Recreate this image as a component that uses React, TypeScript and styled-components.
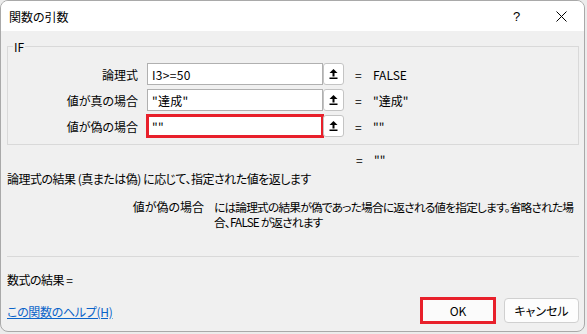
// 関数の引数 ダイアログ - Excel の IF 関数の引数入力画面
import React from "react";
import styled, { createGlobalStyle } from "styled-components";

const GlobalStyle = createGlobalStyle`
  html, body {
    margin: 0;
    padding: 0;
    background: #ececec;
  }
  body {
    font-family: "Noto Sans CJK JP", "Noto Sans", sans-serif;
    font-feature-settings: "palt";
    font-size: 12px;
    color: #000;
  }
`;

const Window = styled.div`
  width: 585px;
  height: 332px;
  box-sizing: border-box;
  border: 1px solid #a9a9a9;
  border-radius: 8px;
  background: #f0f0f0;
  overflow: hidden;
  display: flex;
  flex-direction: column;
`;

const TitleBar = styled.div`
  height: 30px;
  flex-shrink: 0;
  background: #ffffff;
  display: flex;
  align-items: center;
  justify-content: space-between;
  padding-left: 8px;
`;

const Title = styled.div`
  font-size: 12px;
  line-height: 15px;
`;

const Controls = styled.div`
  display: flex;
  height: 100%;
`;

const ControlButton = styled.div`
  width: 45px;
  height: 100%;
  display: flex;
  align-items: center;
  justify-content: center;
  font-size: 13px;
  font-family: "Liberation Sans", sans-serif;
`;

const Body = styled.div`
  flex: 1;
  display: flex;
  flex-direction: column;
  padding: 0 5px 0 6px;
`;

const Group = styled.fieldset`
  margin: 8px 0 0 0;
  border: 1px solid #d9d9d9;
  padding: 9px 0 7px 0;
  display: flex;
  flex-direction: column;
  gap: 4px;
`;

const Legend = styled.legend`
  font-size: 12px;
  line-height: 15px;
  padding: 0 1px;
  margin-left: 5px;
`;

const ArgRow = styled.div`
  display: flex;
  align-items: center;
  height: 22px;
`;

const ArgLabel = styled.div`
  width: 130px;
  margin-right: 9px;
  text-align: right;
  line-height: 15px;
`;

const ArgInput = styled.div<{ $active?: boolean }>`
  width: 176px;
  height: 22px;
  box-sizing: border-box;
  border: 1px solid #b0b0b0;
  background: #ffffff;
  padding-left: 4px;
  display: flex;
  align-items: center;
  line-height: 15px;
  letter-spacing: 0.3px;
  outline: ${(p) => (p.$active ? "3px solid #e8202b" : "none")};
  outline-offset: -2px;
`;

const PickButton = styled.div`
  width: 21px;
  height: 22px;
  box-sizing: border-box;
  border: 1px solid #c4c4c4;
  border-radius: 3px;
  background: #ffffff;
  display: flex;
  align-items: center;
  justify-content: center;
`;

const Eq = styled.span`
  width: 18px;
  margin-left: 11px;
  line-height: 15px;
`;

const Value = styled.span`
  line-height: 15px;
`;

const ResultRow = styled.div`
  display: flex;
  margin-top: 7px;
  padding-left: 338px;
`;

const Text = styled.div<{ $top: number }>`
  margin-top: ${(p) => p.$top}px;
  line-height: 15px;
  letter-spacing: -0.5px;
  white-space: nowrap;
`;

const ArgHelp = styled.div`
  display: grid;
  grid-template-columns: 197px 366px;
  column-gap: 10px;
  margin-top: 13px;
  line-height: 15px;
  white-space: nowrap;
`;

const ArgHelpName = styled.div`
  text-align: right;
`;

const ArgHelpText = styled.div`
  font-size: 11.7px;
  letter-spacing: -0.8px;
`;

const Separator = styled.div`
  margin-top: 27px;
  border-top: 1px solid #d9d9d9;
`;

const Footer = styled.div`
  display: flex;
  align-items: center;
  justify-content: space-between;
  margin-top: 10px;
`;

const HelpLink = styled.a`
  color: #0a63c9;
  text-decoration: underline;
  line-height: 15px;
  margin-top: 2px;
  letter-spacing: -0.3px;
`;

const Buttons = styled.div`
  display: flex;
  align-items: center;
  gap: 8px;
`;

const OkButton = styled.div`
  width: 76px;
  height: 27px;
  box-sizing: border-box;
  border: 3px solid #e8202b;
  background: #fbfbfb;
  display: flex;
  align-items: center;
  justify-content: center;
`;

const CancelButton = styled.div`
  width: 75px;
  height: 25px;
  box-sizing: border-box;
  border: 1px solid #d0d0d0;
  border-radius: 4px;
  background: #fdfdfd;
  display: flex;
  align-items: center;
  justify-content: center;
`;

const PickIcon = () => (
  <svg width="9" height="10" viewBox="0 0 9 10">
    <polygon points="4.5,0 0.5,4 8.5,4" fill="#000" />
    <rect x="3.5" y="3.5" width="2" height="4" fill="#000" />
    <rect x="0.5" y="8.5" width="8" height="1.5" fill="#000" />
  </svg>
);

const CloseIcon = () => (
  <svg width="11" height="11" viewBox="0 0 11 11">
    <path d="M0.5 0.5 L10.5 10.5 M10.5 0.5 L0.5 10.5" stroke="#000" strokeWidth="1" />
  </svg>
);

const args = [
  { label: "論理式", input: "I3>=50", value: "FALSE" },
  { label: "値が真の場合", input: "\"達成\"", value: "\"達成\"" },
  { label: "値が偽の場合", input: "\"\"", value: "\"\"", active: true },
];

export default function App() {
  return (
    <>
      <GlobalStyle />
      <Window>
        <TitleBar>
          <Title>関数の引数</Title>
          <Controls>
            <ControlButton>?</ControlButton>
            <ControlButton>
              <CloseIcon />
            </ControlButton>
          </Controls>
        </TitleBar>

        <Body>
          <Group>
            <Legend>IF</Legend>
            {args.map((a) => (
              <ArgRow key={a.label}>
                <ArgLabel>{a.label}</ArgLabel>
                <ArgInput $active={a.active}>{a.input}</ArgInput>
                <PickButton>
                  <PickIcon />
                </PickButton>
                <Eq>=</Eq>
                <Value>{a.value}</Value>
              </ArgRow>
            ))}
          </Group>

          <ResultRow>
            <Eq>=</Eq>
            <Value>""</Value>
          </ResultRow>

          <Text $top={4}>論理式の結果 (真または偽) に応じて、指定された値を返します</Text>

          <ArgHelp>
            <ArgHelpName>値が偽の場合</ArgHelpName>
            <ArgHelpText>
              には論理式の結果が偽であった場合に返される値を指定します。省略された場
              <br />
              合、FALSE が返されます
            </ArgHelpText>
          </ArgHelp>

          <Separator />

          <Text $top={15}>数式の結果 =</Text>

          <Footer>
            <HelpLink href="#">この関数のヘルプ(H)</HelpLink>
            <Buttons>
              <OkButton>OK</OkButton>
              <CancelButton>キャンセル</CancelButton>
            </Buttons>
          </Footer>
        </Body>
      </Window>
    </>
  );
}
